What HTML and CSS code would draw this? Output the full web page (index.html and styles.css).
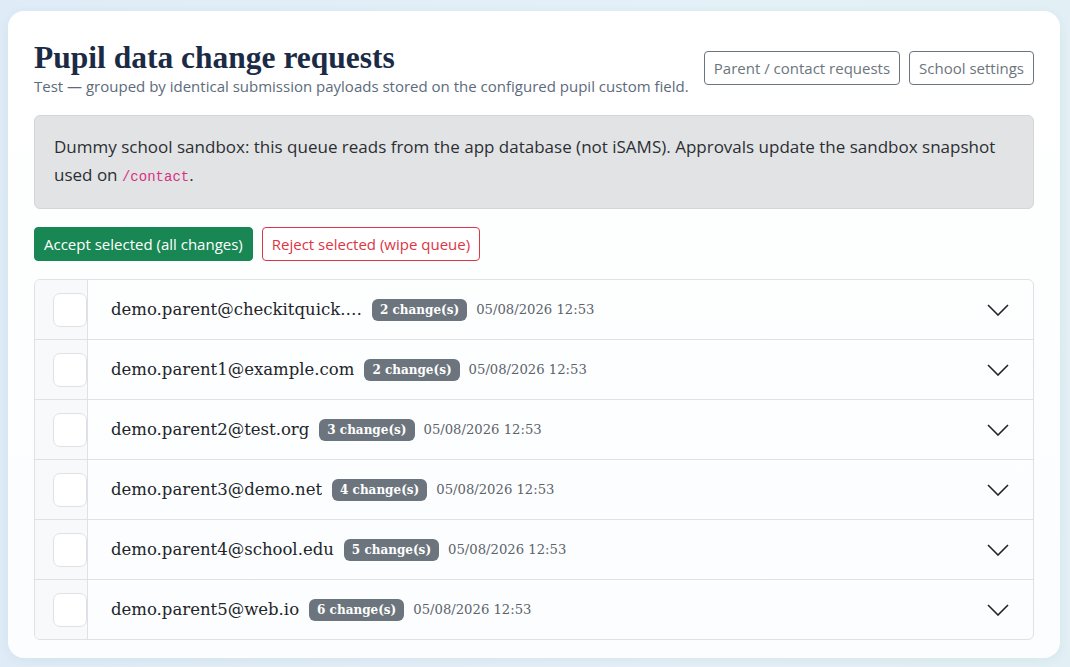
FILE: index.html
```html
<!DOCTYPE html>
<html lang="en">
<head>
    <meta charset="UTF-8">
    <meta name="viewport" content="width=device-width, initial-scale=1.0">
    <title>Pupil data change requests</title>
    <link rel="stylesheet" href="styles.css">
</head>
<body>
    <main class="card">
        <header class="page-head">
            <div>
                <h1>Pupil data change requests</h1>
                <p class="subtitle">Test — grouped by identical submission payloads stored on the configured pupil custom field.</p>
            </div>
            <nav class="head-actions">
                <a class="btn btn-outline-secondary" href="#">Parent / contact requests</a>
                <a class="btn btn-outline-secondary" href="#">School settings</a>
            </nav>
        </header>

        <div class="alert">
            Dummy school sandbox: this queue reads from the app database (not iSAMS). Approvals update the sandbox snapshot used on <code>/contact</code>.
        </div>

        <div class="bulk-actions">
            <button type="button" class="btn btn-success">Accept selected (all changes)</button>
            <button type="button" class="btn btn-outline-danger">Reject selected (wipe queue)</button>
        </div>

        <div class="queue">
            <div class="queue-row">
                <div class="select-cell"><span class="check"></span></div>
                <div class="row-main">
                    <span class="email">demo.parent@checkitquick.example.com</span>
                    <span class="badge">2 change(s)</span>
                    <span class="date">05/08/2026 12:53</span>
                </div>
                <svg class="chevron" width="22" height="12" viewBox="0 0 22 12"><path d="M1 1l10 10 10-10" fill="none" stroke="#212529" stroke-width="1.6"/></svg>
            </div>
            <div class="queue-row">
                <div class="select-cell"><span class="check"></span></div>
                <div class="row-main">
                    <span class="email">demo.parent1@example.com</span>
                    <span class="badge">2 change(s)</span>
                    <span class="date">05/08/2026 12:53</span>
                </div>
                <svg class="chevron" width="22" height="12" viewBox="0 0 22 12"><path d="M1 1l10 10 10-10" fill="none" stroke="#212529" stroke-width="1.6"/></svg>
            </div>
            <div class="queue-row">
                <div class="select-cell"><span class="check"></span></div>
                <div class="row-main">
                    <span class="email">demo.parent2@test.org</span>
                    <span class="badge">3 change(s)</span>
                    <span class="date">05/08/2026 12:53</span>
                </div>
                <svg class="chevron" width="22" height="12" viewBox="0 0 22 12"><path d="M1 1l10 10 10-10" fill="none" stroke="#212529" stroke-width="1.6"/></svg>
            </div>
            <div class="queue-row">
                <div class="select-cell"><span class="check"></span></div>
                <div class="row-main">
                    <span class="email">demo.parent3@demo.net</span>
                    <span class="badge">4 change(s)</span>
                    <span class="date">05/08/2026 12:53</span>
                </div>
                <svg class="chevron" width="22" height="12" viewBox="0 0 22 12"><path d="M1 1l10 10 10-10" fill="none" stroke="#212529" stroke-width="1.6"/></svg>
            </div>
            <div class="queue-row">
                <div class="select-cell"><span class="check"></span></div>
                <div class="row-main">
                    <span class="email">demo.parent4@school.edu</span>
                    <span class="badge">5 change(s)</span>
                    <span class="date">05/08/2026 12:53</span>
                </div>
                <svg class="chevron" width="22" height="12" viewBox="0 0 22 12"><path d="M1 1l10 10 10-10" fill="none" stroke="#212529" stroke-width="1.6"/></svg>
            </div>
            <div class="queue-row">
                <div class="select-cell"><span class="check"></span></div>
                <div class="row-main">
                    <span class="email">demo.parent5@web.io</span>
                    <span class="badge">6 change(s)</span>
                    <span class="date">05/08/2026 12:53</span>
                </div>
                <svg class="chevron" width="22" height="12" viewBox="0 0 22 12"><path d="M1 1l10 10 10-10" fill="none" stroke="#212529" stroke-width="1.6"/></svg>
            </div>
        </div>
    </main>
</body>
</html>
```

FILE: styles.css
```css
* {
    box-sizing: border-box;
}

body {
    margin: 0;
    padding: 11px 10px 9px 8px;
    font-family: "Open Sans", "Noto Sans", sans-serif;
    color: #212529;
    background: linear-gradient(90deg, #dfecf7 0%, #e4f0f7 60%, #e2f0f5 100%);
    min-height: 667px;
}

.card {
    background: linear-gradient(180deg, #ffffff 0%, #fbfdfe 100%);
    border-radius: 16px;
    padding: 28px 26px 18px 26px;
    box-shadow: 0 2px 12px rgba(30, 60, 90, 0.06);
}

.page-head {
    display: flex;
    justify-content: space-between;
    align-items: flex-start;
    margin-bottom: 18px;
}

h1 {
    font-family: "Liberation Serif", serif;
    font-size: 31.5px;
    font-weight: bold;
    color: #1c2b45;
    margin: 0;
    line-height: 37px;
}

.subtitle {
    margin: 0;
    font-size: 15px;
    color: #5d6b7b;
    line-height: 21px;
}

.head-actions {
    display: flex;
    gap: 9px;
    margin-top: 12px;
}

.btn {
    display: inline-block;
    font-family: "Open Sans", "Noto Sans", sans-serif;
    font-size: 15px;
    line-height: 22px;
    padding: 5px 9px;
    border: 1px solid transparent;
    border-radius: 4px;
    text-decoration: none;
    background: none;
    cursor: pointer;
}

.btn-outline-secondary {
    color: #6c757d;
    border-color: #6c757d;
}

.btn-success {
    background: #198754;
    border-color: #198754;
    color: #fff;
}

.btn-outline-danger {
    color: #dc3545;
    border-color: #dc3545;
    background: #fff;
}

.alert {
    background: #e2e3e5;
    border: 1px solid #d3d6d8;
    border-radius: 6px;
    padding: 17px 19px;
    font-size: 17px;
    line-height: 28px;
    color: #2b2f33;
    margin-bottom: 18px;
}

code {
    font-family: "Liberation Mono", monospace;
    font-size: 14px;
    color: #d63384;
}

.bulk-actions {
    display: flex;
    gap: 9px;
    margin-bottom: 18px;
}

.queue {
    border: 1px solid #dee2e6;
    border-radius: 6px;
    overflow: hidden;
}

.queue-row {
    display: flex;
    align-items: center;
    height: 60px;
    border-top: 1px solid #dee2e6;
}

.queue-row:first-child {
    border-top: none;
    height: 59px;
}

.select-cell {
    width: 53px;
    align-self: stretch;
    background: #f8f9fa;
    border-right: 1px solid #dee2e6;
    display: flex;
    align-items: center;
    padding-left: 18px;
}

.check {
    width: 34px;
    height: 34px;
    background: #fff;
    border: 1px solid #dee2e6;
    border-radius: 7px;
    margin-right: -2px;
}

.row-main {
    flex: 1;
    display: flex;
    align-items: center;
    padding-left: 23px;
    font-family: "DejaVu Serif", serif;
    min-width: 0;
}

.email {
    font-size: 16.5px;
    color: #212529;
    max-width: 251px;
    white-space: nowrap;
    overflow: hidden;
    text-overflow: ellipsis;
    margin-right: 10px;
}

.badge {
    background: #6c757d;
    color: #fff;
    font-weight: bold;
    font-size: 12px;
    line-height: 22px;
    padding: 0 8px;
    border-radius: 6px;
    margin-right: 9px;
}

.date {
    font-size: 13.2px;
    color: #5c636a;
}

.chevron {
    margin-right: 24px;
}
```
